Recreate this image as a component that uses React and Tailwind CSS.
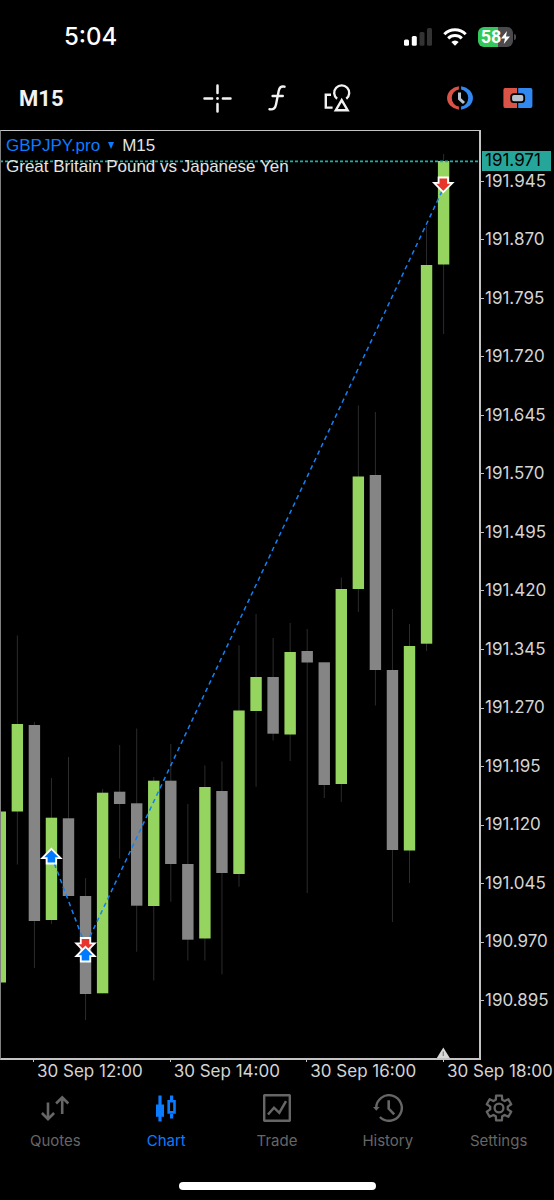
import clsx from "clsx";

const prices = [
  "191.945", "191.870", "191.795", "191.720", "191.645",
  "191.570", "191.495", "191.420", "191.345", "191.270",
  "191.195", "191.120", "191.045", "190.970", "190.895",
];

const times = ["30 Sep 12:00", "30 Sep 14:00", "30 Sep 16:00", "30 Sep 18:00"];

// [up, bodyTop, bodyBottom, wickTop, wickBottom]
const candles = [
  [1, 811.5, 982.5, 811.5, 982.5],
  [1, 724, 811.5, 635.5, 864.5],
  [0, 725, 921, 722, 968],
  [1, 817.7, 920, 778, 924],
  [0, 818.3, 896, 757, 896],
  [0, 896, 994, 878, 1020],
  [1, 792.7, 993.3, 789, 993.3],
  [0, 791.7, 804, 745, 858.5],
  [0, 803.3, 905.7, 728.5, 951.7],
  [1, 780.7, 906, 777, 980.5],
  [0, 780.7, 864, 744, 901.7],
  [0, 864, 939.7, 804, 960.5],
  [1, 787, 938.5, 765.5, 960.5],
  [0, 791, 873, 761.5, 974.3],
  [1, 710.5, 874, 645.3, 886.7],
  [1, 677, 711, 614, 786.7],
  [0, 677, 733.7, 638, 740.5],
  [1, 652, 734.5, 623, 761],
  [0, 651, 662.5, 629, 893],
  [0, 662.3, 785, 662.3, 798],
  [1, 589, 784, 577.5, 802],
  [1, 476.5, 589, 405.5, 612],
  [0, 475, 670, 412, 705.5],
  [0, 670, 850, 609, 922],
  [1, 646, 850.5, 624, 883],
  [1, 265, 643.7, 226, 651],
  [1, 161, 264.5, 154, 334],
];

const candleX = (i) => 0.3 + i * 17.05;

const UpArrow = ({ x, y }) => (
  <path
    transform={`translate(${x} ${y})`}
    d="M0 -7.6 L9.2 1.7 L4.7 1.7 L4.7 7 L-4.7 7 L-4.7 1.7 L-9.2 1.7 Z"
    fill="#007aff"
    stroke="#fff"
    strokeWidth="1.8"
  />
);

const DownArrow = ({ x, y }) => (
  <path
    transform={`translate(${x} ${y})`}
    d="M0 7.6 L9.2 -1.7 L4.7 -1.7 L4.7 -7 L-4.7 -7 L-4.7 -1.7 L-9.2 -1.7 Z"
    fill="#e8352c"
    stroke="#fff"
    strokeWidth="1.8"
  />
);

const Candles = () => (
  <svg viewBox="1 131 478 927" className="block h-auto w-full">
    {candles.map(([up, top, bottom, high, low], i) => (
      <g key={i}>
        <rect x={candleX(i) - 0.5} y={high} width="1" height={low - high} fill="#2c2c2c" />
        <rect
          x={candleX(i) - 5.7}
          y={top}
          width="11.4"
          height={bottom - top}
          fill={up ? "#95d55f" : "#858585"}
        />
      </g>
    ))}

    {/* Current price */}
    <path d="M0 161.4 H480" stroke="#20b0a2" strokeWidth="1.6" strokeDasharray="3 2" />

    {/* Trades */}
    <path
      d="M51.5 856 L85.5 946 L443.5 188"
      fill="none"
      stroke="#1381f5"
      strokeWidth="1.5"
      strokeDasharray="4.5 3.7"
    />
    <UpArrow x={51.4} y={856.5} />
    <DownArrow x={85.5} y={945} />
    <UpArrow x={85.5} y={954.5} />
    <DownArrow x={443.3} y={184.5} />

    {/* Session marker */}
    <path d="M443.3 1047.5 L449.8 1058 H436.8 Z" fill="#d8d8d8" />
    <path d="M443.3 1051.5 V1056" stroke="#8a8a8a" strokeWidth="1.4" />
  </svg>
);

const CrosshairIcon = () => (
  <svg width="29" height="29" viewBox="-14.5 -14.5 29 29" fill="none" stroke="#f2f2f2" strokeWidth="2.5" strokeLinecap="round">
    <path d="M0 -13V-5.4M0 13V5.4M-13 0H-5.4M13 0H5.4" />
    <circle r="1.4" fill="#f2f2f2" stroke="none" />
  </svg>
);

const FunctionIcon = () => (
  <svg width="18" height="26" viewBox="0 0 18 26" fill="none" stroke="#f2f2f2" strokeWidth="2.4" strokeLinecap="round">
    <path d="M16.5 1.7C12.8.9 11.4 2.6 10.7 6L8 19.5C7.3 23.2 5.4 25 1.5 24.2" />
    <path d="M4.6 11H14.8" />
  </svg>
);

const ObjectsIcon = () => (
  <svg width="27" height="28" viewBox="0 0 27 28" fill="none" stroke="#f2f2f2" strokeWidth="2.4">
    <path d="M7 10.8H1.8V23.6H8.6" />
    <path d="M13.1 14.8A7.5 7.5 0 1 1 22.3 14.8" />
    <path d="M17.7 16.2L23.6 26.2H11.8Z" />
  </svg>
);

const TradeClockIcon = () => (
  <svg width="28" height="24" viewBox="-14 -12 28 24">
    <path d="M-1.1 -11.8A13.6 11.9 0 0 0 -1.1 11.8V8.6A8.4 8.7 0 0 1 -1.1 -8.6Z" fill="#db5246" />
    <path d="M1.1 -11.8A13.6 11.9 0 0 1 1.1 11.8V8.6A8.4 8.7 0 0 0 1.1 -8.6Z" fill="#3188f0" />
    <path d="M-.5 -5.4V.8L4 5" fill="none" stroke="#b8c2cc" strokeWidth="3" />
  </svg>
);

const OneClickIcon = () => (
  <svg width="30" height="20" viewBox="0 0 30 20">
    <path d="M2 0H14V20H2Q.4 20 .4 18V2Q.4 0 2 0Z" fill="#db5246" />
    <path d="M15.2 0H27.5Q29.4 0 29.4 2V18Q29.4 20 27.5 20H15.2Z" fill="#3188f0" />
    <rect x="8.2" y="6.1" width="13" height="8" rx="2.6" fill="#b8c2cc" stroke="#000" strokeWidth="1.8" />
  </svg>
);

const QuotesIcon = () => (
  <svg width="28" height="28" viewBox="0 0 28 28" fill="none" stroke="currentColor" strokeWidth="2.6">
    <path d="M7 8.5V25.5M.9 19L7 25.2L13.1 19" />
    <path d="M21.2 20V3M15.1 9.5L21.2 3.3L27.3 9.5" />
  </svg>
);

const ChartIcon = () => (
  <svg width="20" height="28" viewBox="0 0 20 28" fill="none" stroke="currentColor" strokeWidth="3.2">
    <path d="M4 1.5V27.5M15.6 1.5V6.5M15.6 20V24.5" />
    <path d="M0 10.5H8V22.8H0Z" fill="currentColor" stroke="none" />
    <path d="M12.7 7.2H18.5V18.4H12.7Z" strokeWidth="2.6" />
  </svg>
);

const TradeIcon = () => (
  <svg width="28" height="28" viewBox="0 0 28 28" fill="none" stroke="currentColor" strokeWidth="2.5">
    <rect x="1.15" y="1.15" width="25.7" height="25.7" rx="1" />
    <path d="M5 20.5L11 13.7L16.3 18.8L23 7.2" />
  </svg>
);

const HistoryIcon = () => (
  <svg width="30" height="28" viewBox="0 0 30 28" fill="none" stroke="currentColor" strokeWidth="2.4">
    <path d="M3.2 14A12.8 12.8 0 1 1 6.9 23" />
    <path d="M15.7 6.3V14.6L21.2 20.4" strokeWidth="2.6" />
    <path d="M0 13H6.6L3.3 16.8Z" fill="currentColor" stroke="none" />
  </svg>
);

// six teeth, the first one at the top
const gearPoints = [0, 60, 120, 180, 240, 300]
  .flatMap((a) => [[a - 21, 8.9], [a - 13, 12.8], [a + 13, 12.8], [a + 21, 8.9]])
  .map(([deg, r]) => {
    const t = (deg * Math.PI) / 180;
    return `${(Math.sin(t) * r).toFixed(2)},${(-Math.cos(t) * r).toFixed(2)}`;
  })
  .join(" ");

const SettingsIcon = () => (
  <svg width="28" height="28" viewBox="-14 -14 28 28" fill="none" stroke="currentColor" strokeWidth="2.3" strokeLinejoin="round">
    <polygon points={gearPoints} />
    <circle r="4.4" />
  </svg>
);

const SignalIcon = () => (
  <svg width="28" height="18" viewBox="0 0 28 18">
    <rect x="0" y="11.5" width="5" height="6.3" rx="1.5" fill="#fff" />
    <rect x="7.8" y="8" width="5" height="9.8" rx="1.5" fill="#fff" />
    <rect x="15.5" y="4" width="5" height="13.8" rx="1.5" fill="#333" />
    <rect x="23" y="0" width="5" height="17.8" rx="1.5" fill="#333" />
  </svg>
);

const WifiIcon = () => (
  <svg width="24" height="18" viewBox="0 0 24 18" fill="none" stroke="#fff" strokeWidth="3">
    <path d="M1.3 6.2A15.2 15.2 0 0 1 22.7 6.2" />
    <path d="M5.2 10.4A9.7 9.7 0 0 1 18.8 10.4" />
    <path d="M12 17.8L8.3 14.1A5.2 5.2 0 0 1 15.7 14.1Z" fill="#fff" stroke="none" />
  </svg>
);

const Battery = () => (
  <div className="flex items-center gap-px">
    <div className="flex h-5 w-[35px] items-center justify-center rounded-[6px] bg-linear-to-r from-[#34c759] from-58% to-[#4a4a4c] to-58%">
      <span className="font-['Roboto',sans-serif] text-lg leading-5 font-bold">58</span>
      <svg width="9" height="13" viewBox="0 0 9 13" fill="#fff">
        <path d="M6 0L0 7.4H3.9L2.8 13L9 5.4H5Z" />
      </svg>
    </div>
    <div className="h-[6px] w-[2px] rounded-r-full bg-[#4a4a4c]" />
  </div>
);

const tools = [
  { label: "Crosshair", Icon: CrosshairIcon },
  { label: "Indicators", Icon: FunctionIcon },
  { label: "Objects", Icon: ObjectsIcon },
];

const tradeTools = [
  { label: "New order", Icon: TradeClockIcon },
  { label: "One click trading", Icon: OneClickIcon },
];

const tabs = [
  { label: "Quotes", Icon: QuotesIcon },
  { label: "Chart", Icon: ChartIcon, active: true },
  { label: "Trade", Icon: TradeIcon },
  { label: "History", Icon: HistoryIcon },
  { label: "Settings", Icon: SettingsIcon },
];

const StatusBar = () => (
  <div className="flex h-[74px] items-center justify-between pr-[38px] pl-16 text-white">
    <span className="text-2xl font-medium">5:04</span>
    <div className="flex items-center gap-[11px]">
      <SignalIcon />
      <WifiIcon />
      <Battery />
    </div>
  </div>
);

const Toolbar = () => (
  <header className="mb-2 grid h-12 grid-cols-[1fr_auto_1fr] items-center">
    <div className="pl-[19px]">
      <button className="font-['Roboto',sans-serif] text-[22px] font-bold text-[#f2f2f2]">
        M15
      </button>
    </div>
    <div className="flex">
      {tools.map(({ label, Icon }) => (
        <button key={label} aria-label={label} className="flex h-12 w-15 items-center justify-center">
          <Icon />
        </button>
      ))}
    </div>
    <div className="flex justify-end pr-[7px]">
      {tradeTools.map(({ label, Icon }) => (
        <button key={label} aria-label={label} className="flex h-12 w-[58px] items-center justify-center">
          <Icon />
        </button>
      ))}
    </div>
  </header>
);

const Chart = () => (
  <main>
    <div className="flex">
      <div className="relative min-w-0 flex-1 border-t border-r-2 border-b-2 border-l border-[#c4c4c4] border-l-[#808080]">
        <Candles />
        <div className="absolute top-1 left-[5px] font-['Liberation_Sans',sans-serif] text-[17px] leading-[21px] text-[#e4e4e4]">
          <div className="flex items-center">
            <button className="flex items-center text-[#0a7cff]">
              GBPJPY.pro
              <svg width="6" height="7" viewBox="0 0 6 7" fill="currentColor" className="mx-2">
                <path d="M0 0H6L3 7Z" />
              </svg>
            </button>
            <span>M15</span>
          </div>
          <p>Great Britain Pound vs Japanese Yen</p>
        </div>
      </div>

      <div className="relative w-[73px] pt-[22px] pb-[30px] text-[17px] text-[#d4d4d4]">
        <ul className="grid h-full auto-rows-fr">
          {prices.map((price) => (
            <li key={price} className="flex items-center gap-px">
              <span className="h-px w-[3px] bg-[#c4c4c4]" />
              {price}
            </li>
          ))}
        </ul>
        <span className="absolute top-[21px] left-px flex h-5 w-[69px] items-center bg-[#26a69a] pl-[3px] text-black">
          191.971
        </span>
      </div>
    </div>

    <div className="grid grid-cols-[repeat(3,1fr)_111px] pl-[33px] text-[#d4d4d4]">
      {times.map((time) => (
        <div key={time}>
          <div className="h-[2px] w-px bg-[#c4c4c4]" />
          <span className="block pl-1 text-[17px] leading-[18px] whitespace-nowrap">{time}</span>
        </div>
      ))}
    </div>
  </main>
);

const TabBar = () => (
  <nav className="mt-[14px] grid grid-cols-5">
    {tabs.map(({ label, Icon, active }) => (
      <a
        key={label}
        href="#"
        className={clsx(
          "flex flex-col items-center gap-2 text-[15px] leading-[22px]",
          active ? "text-[#0a7cff]" : "text-[#666666]"
        )}
      >
        <Icon />
        {label}
      </a>
    ))}
  </nav>
);

const App = () => {
  return (
    <div className="min-h-screen overflow-x-hidden bg-black font-['Inter',sans-serif]">
      <StatusBar />
      <Toolbar />
      <Chart />
      <TabBar />
      <div className="mx-auto mt-[30px] mb-[11px] h-2 w-[197px] rounded-full bg-white" />
    </div>
  );
};

export default App;
